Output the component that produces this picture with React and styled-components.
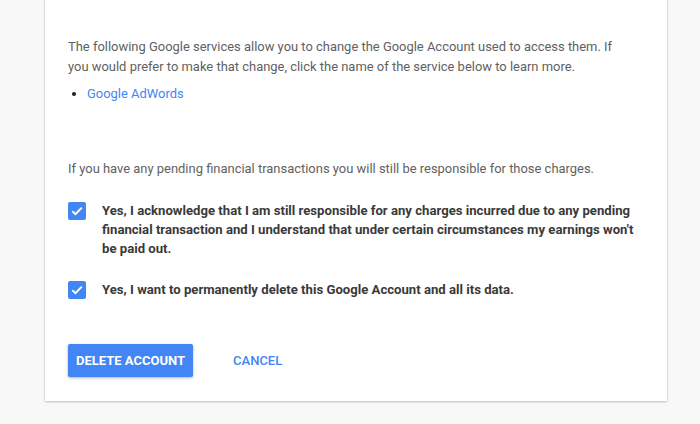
import React from "react";
import styled, { createGlobalStyle } from "styled-components";

const Global = createGlobalStyle`
  html, body { margin: 0; padding: 0; background: #f8f8f8; }
  body { font-family: Roboto, "Liberation Sans", Arial, sans-serif; -webkit-font-smoothing: antialiased; }
`;

const Page = styled.div`
  width: 700px;
  height: 424px;
  overflow: hidden;
  padding: 0 33px 0 45px;
  box-sizing: border-box;
`;

const Card = styled.div`
  margin-top: -8px;
  background: #fff;
  box-shadow: 0 1px 2px rgba(0,0,0,0.22), 0 0 1px rgba(0,0,0,0.14);
  padding: 45px 23px 24px 23px;
`;

const Para = styled.p`
  margin: 0;
  font-size: 12.95px;
  line-height: 20px;
  color: #616161;
`;

const List = styled.ul`
  margin: 7px 0 0;
  padding-left: 19px;
  font-size: 12.95px;
  line-height: 20px;
  color: #212121;
`;

const Link = styled.a`
  color: #4285f4;
  text-decoration: none;
`;

const Spaced = styled(Para)`
  margin-top: 55px;
`;

const Checks = styled.div`
  display: flex;
  flex-direction: column;
  gap: 22px;
  margin-top: 22px;
`;

const CheckRow = styled.label`
  display: flex;
  align-items: flex-start;
  gap: 16px;
`;

const Box = styled.span`
  flex: none;
  width: 18px;
  height: 18px;
  margin-top: 1px;
  border-radius: 2px;
  background: #4285f4;
  display: flex;
  align-items: center;
  justify-content: center;
`;

const CheckText = styled.span`
  font-size: 13.15px;
  line-height: 19px;
  font-weight: 700;
  color: #3a3a3a;
  max-width: 545px;
`;

const Actions = styled.div`
  display: flex;
  align-items: center;
  gap: 40px;
  margin-top: 45px;
`;

const Primary = styled.button`
  height: 33px;
  padding: 0 8px;
  min-width: 125px;
  border: none;
  border-radius: 2px;
  background: #4285f4;
  color: #fff;
  font-family: inherit;
  font-size: 13px;
  font-weight: 700;
  text-transform: uppercase;
  box-shadow: 0 1px 3px rgba(0,0,0,0.3);
`;

const Flat = styled.button`
  border: none;
  background: none;
  padding: 0;
  color: #4285f4;
  font-family: inherit;
  font-size: 13px;
  font-weight: 500;
  text-transform: uppercase;
`;

const Check = () => (
  <Box>
    <svg width="14" height="14" viewBox="0 0 14 14">
      <path d="M2.3 7.2 L5.5 10.2 L11.8 3.6" fill="none" stroke="#fff" strokeWidth="2" />
    </svg>
  </Box>
);

export default function App() {
  return (
    <Page>
      <Global />
      <Card>
        <Para>
          The following Google services allow you to change the Google Account used to access them. If
          <br />
          you would prefer to make that change, click the name of the service below to learn more.
        </Para>
        <List>
          <li><Link href="#">Google AdWords</Link></li>
        </List>
        <Spaced>If you have any pending financial transactions you will still be responsible for those charges.</Spaced>
        <Checks>
          <CheckRow>
            <Check />
            <CheckText>
              Yes, I acknowledge that I am still responsible for any charges incurred due to any pending
              financial transaction and I understand that under certain circumstances my earnings won't
              be paid out.
            </CheckText>
          </CheckRow>
          <CheckRow>
            <Check />
            <CheckText>Yes, I want to permanently delete this Google Account and all its data.</CheckText>
          </CheckRow>
        </Checks>
        <Actions>
          <Primary>Delete account</Primary>
          <Flat>Cancel</Flat>
        </Actions>
      </Card>
    </Page>
  );
}
